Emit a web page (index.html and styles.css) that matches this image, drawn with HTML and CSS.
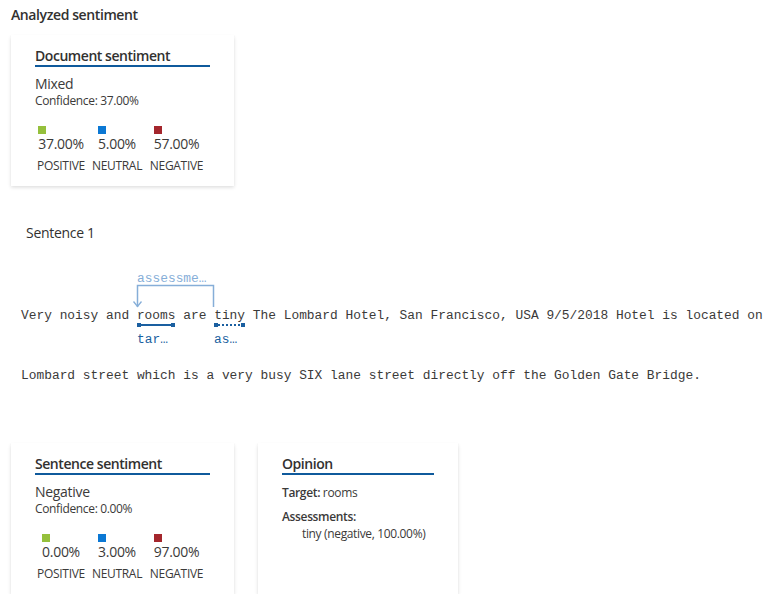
FILE: index.html
```html
<!DOCTYPE html>
<html lang="en">
<head>
<meta charset="utf-8">
<title>Analyzed sentiment</title>
<link rel="stylesheet" href="styles.css">
</head>
<body>
<div class="page">
  <div class="heading">Analyzed sentiment</div>

  <div class="card">
    <div class="card-title">Document sentiment</div>
    <div class="label-big">Mixed</div>
    <div class="small">Confidence: 37.00%</div>
    <div class="metrics">
      <div class="metric m1">
        <div class="metric-top"><span class="sq pos"></span><div class="val">37.00%</div></div>
        <div class="cap">POSITIVE</div>
      </div>
      <div class="metric m2">
        <div class="metric-top"><span class="sq neu"></span><div class="val">5.00%</div></div>
        <div class="cap">NEUTRAL</div>
      </div>
      <div class="metric m3">
        <div class="metric-top"><span class="sq neg"></span><div class="val">57.00%</div></div>
        <div class="cap">NEGATIVE</div>
      </div>
    </div>
  </div>

  <div class="sentence-label">Sentence 1</div>

  <div class="text">
    <div class="line line-first">
      <span class="ann ann-arc">assessme…</span>
      <svg class="arc" width="90" height="30" viewBox="0 0 90 30">
        <path d="M4.5 24 V2.5 H80.5 V24" fill="none" stroke="#86aed8" stroke-width="1.5"/>
        <path d="M0.5 18.5 L4.5 23.5 L8.5 18.5" fill="none" stroke="#86aed8" stroke-width="1.3"/>
      </svg>
      <span class="uline solid"></span>
      <span class="uline dotted"></span>
      <span class="ann ann-target">tar…</span>
      <span class="ann ann-assess">as…</span>
      Very noisy and rooms are tiny The Lombard Hotel, San Francisco, USA 9/5/2018 Hotel is located on
    </div>
    <div class="line line-second">Lombard street which is a very busy SIX lane street directly off the Golden Gate Bridge.</div>
  </div>

  <div class="cards-row">
    <div class="card">
      <div class="card-title">Sentence sentiment</div>
      <div class="label-big">Negative</div>
      <div class="small">Confidence: 0.00%</div>
      <div class="metrics">
        <div class="metric m1">
          <div class="metric-top"><span class="sq pos"></span><div class="val">0.00%</div></div>
          <div class="cap">POSITIVE</div>
        </div>
        <div class="metric m2">
          <div class="metric-top"><span class="sq neu"></span><div class="val">3.00%</div></div>
          <div class="cap">NEUTRAL</div>
        </div>
        <div class="metric m3">
          <div class="metric-top"><span class="sq neg"></span><div class="val">97.00%</div></div>
          <div class="cap">NEGATIVE</div>
        </div>
      </div>
    </div>

    <div class="card card-narrow">
      <div class="card-title">Opinion</div>
      <div class="small op-row"><b>Target:</b> rooms</div>
      <div class="small op-row"><b>Assessments:</b></div>
      <div class="small op-indent">tiny (negative, 100.00%)</div>
    </div>
  </div>
</div>
</body>
</html>
```

FILE: styles.css
```css
* { box-sizing: border-box; }

body {
  margin: 0;
  background: #ffffff;
  font-family: "Segoe UI", "Open Sans", "Noto Sans", sans-serif;
  color: #323130;
}

.page {
  padding: 5px 0 0 11px;
}

.heading {
  font-size: 14px;
  font-weight: 600;
  line-height: 20px;
  letter-spacing: -0.4px;
  color: #323130;
}

.card {
  width: 223px;
  height: 151px;
  margin-top: 10px;
  padding: 12px 24px 0 24px;
  background: #ffffff;
  box-shadow: 0 1.6px 3.6px rgba(0, 0, 0, 0.14), 0 0.3px 0.9px rgba(0, 0, 0, 0.12);
}

.card-title {
  font-size: 14px;
  font-weight: 600;
  line-height: 18px;
  letter-spacing: -0.45px;
  color: #323130;
  border-bottom: 2px solid #0f5a9c;
}

.label-big {
  margin-top: 8px;
  font-size: 14px;
  line-height: 18px;
  letter-spacing: -0.3px;
  color: #3b3a39;
}

.small {
  font-size: 12px;
  line-height: 16px;
  letter-spacing: -0.35px;
  color: #3b3a39;
}

.metrics {
  display: flex;
  margin-top: 17px;
}

.metric {
  display: flex;
  flex-direction: column;
  align-items: center;
}

.m1 { width: 52px; margin-right: 4px; }
.m2 { width: 52px; margin-right: 7px; }
.m3 { width: 53px; }

.metric-top {
  display: flex;
  flex-direction: column;
  align-items: flex-start;
}

.sq {
  display: block;
  width: 8px;
  height: 8px;
}
.pos { background: #95c03c; }
.neu { background: #0b78d4; }
.neg { background: #a4262c; }

.val {
  margin-top: 1px;
  font-size: 14px;
  line-height: 18px;
  letter-spacing: -0.3px;
  color: #3b3a39;
  white-space: nowrap;
}

.cap {
  margin-top: 5px;
  font-size: 12px;
  line-height: 16px;
  letter-spacing: -0.3px;
  color: #3b3a39;
  white-space: nowrap;
}

.sentence-label {
  margin-top: 37px;
  padding-left: 15px;
  font-size: 14px;
  line-height: 20px;
  letter-spacing: -0.3px;
  color: #323130;
}

.text {
  margin-left: 10px;
  font-family: "Liberation Mono", "DejaVu Sans Mono", monospace;
  font-size: 12.88px;
  line-height: 20px;
  color: #3b3a39;
}

.line {
  white-space: nowrap;
}

.line-first {
  position: relative;
  margin-top: 63px;
}

.line-second {
  margin-top: 40px;
}

.ann {
  position: absolute;
  white-space: nowrap;
  font-family: "Liberation Mono", "DejaVu Sans Mono", monospace;
  font-size: 12.88px;
  line-height: 14px;
}

.ann-arc {
  left: 116px;
  top: -34px;
  color: #86aed8;
}

.arc {
  position: absolute;
  left: 112px;
  top: -23px;
}

.uline {
  position: absolute;
  top: 17px;
  height: 4px;
}
.uline.solid {
  left: 116px;
  width: 38px;
  background: linear-gradient(#1a5fa0, #1a5fa0) center / 100% 2px no-repeat;
}
.uline.dotted {
  left: 193px;
  width: 31px;
  background: repeating-linear-gradient(90deg, #1a5fa0 0 2px, transparent 2px 4px) center / 100% 2px no-repeat;
}
.uline::before,
.uline::after {
  content: "";
  position: absolute;
  top: 0;
  width: 4px;
  height: 4px;
  background: #1a5fa0;
}
.uline::before { left: 0; }
.uline::after { right: 0; }

.ann-target {
  left: 116px;
  top: 27px;
  color: #1a5fa0;
}
.ann-assess {
  left: 193px;
  top: 27px;
  color: #1a5fa0;
}

.cards-row {
  display: flex;
  gap: 24px;
  margin-top: 57px;
}

.cards-row .card {
  margin-top: 0;
}

.card-narrow {
  width: 200px;
}

.op-row {
  margin-top: 10px;
}
.op-row + .op-row {
  margin-top: 8px;
}
.op-row b {
  font-weight: 600;
}
.op-indent {
  padding-left: 20px;
  margin-top: 1px;
}
```
